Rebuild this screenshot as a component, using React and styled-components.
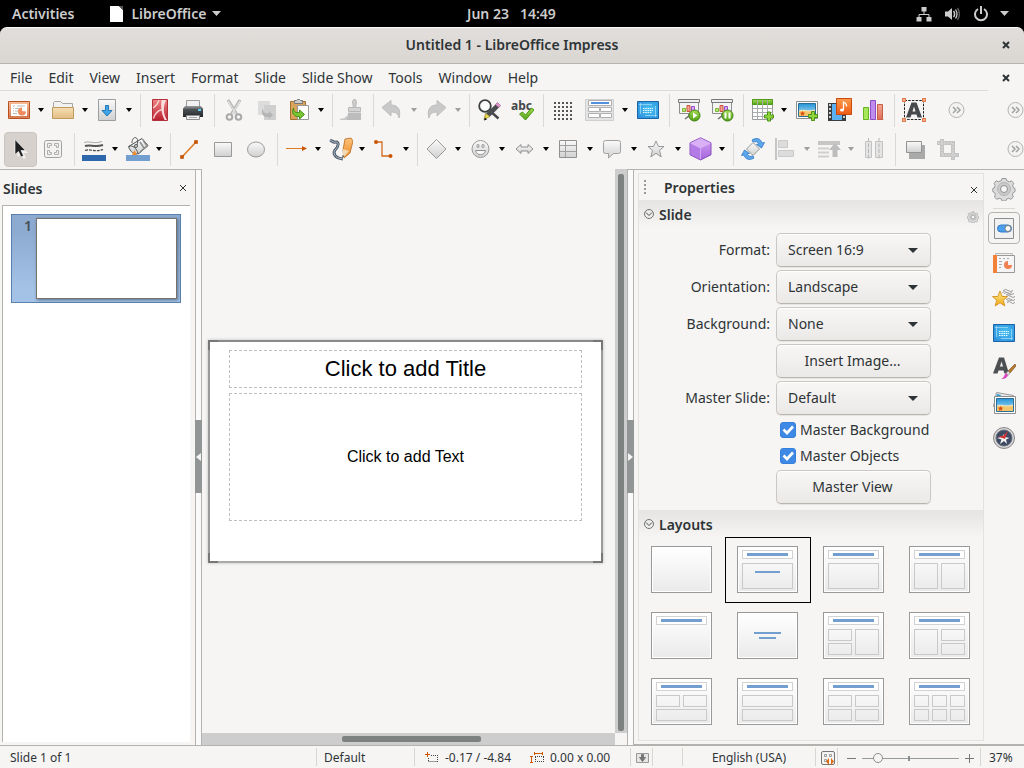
import React from "react";
import styled, { createGlobalStyle, css } from "styled-components";

const GlobalStyle = createGlobalStyle`
  *, *::before, *::after { box-sizing: border-box; }
  html, body { margin: 0; background: #f6f5f4; }
  body, button, input, select {
    font-family: "Noto Sans", "Open Sans", sans-serif;
    font-size: 14px;
    line-height: 20px;
    color: #2e3436;
  }
  button, input { margin: 0; }
`;

/* ---------- shell ---------- */

const Window = styled.div`
  display: flex;
  flex-direction: column;
  height: 100vh;
  min-height: 760px;
  overflow: hidden;
`;

const PlainButton = styled.button`
  border: 0;
  padding: 0;
  background: transparent;
  color: inherit;
  display: inline-flex;
  align-items: center;
  justify-content: center;
  flex: none;
  white-space: nowrap;
`;

const TopBar = styled.header`
  display: grid;
  grid-template-columns: 1fr auto 1fr;
  align-items: center;
  flex: none;
  height: 27px;
  padding: 0 15px 0 12px;
  background: #000;
  color: #ccc;
`;

const TopGroup = styled.div`
  display: flex;
  align-items: center;
  gap: ${(p) => p.$gap}px;
  justify-content: ${(p) => (p.$end ? "flex-end" : "flex-start")};
`;

const TopButton = styled(PlainButton)`
  gap: 6px;
  font-weight: 600;
`;

const ClockButton = styled(TopButton)`
  gap: 11px;
  padding-left: 2px;
`;

const TitleFrame = styled.div`
  flex: none;
  background: #000;
`;

const TitleBar = styled.div`
  display: grid;
  grid-template-columns: 24px 1fr 24px;
  align-items: center;
  height: 37px;
  padding: 0 6px 1px;
  border-top: 1px solid #fbfafa;
  border-bottom: 1px solid #b8b3ad;
  border-radius: 7px 7px 0 0;
  background: linear-gradient(#e1dedb, #dad6d2);
`;

const WindowTitle = styled.h1`
  grid-column: 2;
  margin: 0;
  text-align: center;
  font-size: 14px;
  line-height: 20px;
  font-weight: 600;
`;

const MenuRow = styled.div`
  display: flex;
  align-items: center;
  flex: none;
  height: 27px;
  padding-right: 6px;
`;

const MenuBar = styled.nav`
  display: flex;
  flex: 1;
  align-items: stretch;
  height: 27px;
  margin-right: 6px;
  padding-left: 2px;
  border-bottom: 1px solid #dddad7;
`;

const MenuItem = styled(PlainButton)`
  padding: 1px 8px 0;
`;

const CloseButton = styled(PlainButton)`
  width: 24px;
  height: 24px;
`;

const ToolRow = styled.div`
  display: flex;
  flex: none;
  justify-content: space-between;
  height: 39px;
  padding: 2px 0 2px 4px;
  overflow: hidden;
`;

const ToolSet = styled.div`
  display: flex;
  flex: 1;
  min-width: 0;
  overflow: hidden;
`;

const ToolButton = styled(PlainButton)`
  width: ${(p) => (p.$wide ? 41 : 33)}px;
  height: 35px;
  padding: 0 5px 1px 4px;
  border-radius: 4px;
  ${(p) =>
    p.$pressed &&
    css`
      background: #d6d1cd;
      border: 1px solid #cbc5bf;
      padding: 0 4px 1px 3px;
    `}
`;

const DropButton = styled(PlainButton)`
  width: 11px;
  height: 35px;
  padding: 0 4px 2px 1px;
  opacity: ${(p) => (p.disabled ? 0.35 : 1)};
`;

const ToolSeparator = styled.span`
  flex: none;
  width: 8px;
  height: 33px;
  margin-top: 1px;
  background: linear-gradient(#dbd8d5, #dbd8d5) 4px 0 / 1px 100% no-repeat;
`;

const OverflowButton = styled(PlainButton)`
  width: 17px;
  height: 35px;
  padding-bottom: 1px;
  margin-right: ${(p) => (p.$inner ? 42 : 0)}px;
`;

/* ---------- work area ---------- */

const Body = styled.main`
  display: flex;
  flex: 1;
  min-height: 0;
`;

const SlidePanel = styled.aside`
  display: flex;
  flex-direction: column;
  flex: none;
  width: 195px;
  padding-left: 2px;
  padding-bottom: 3px;
  border-top: 1px solid #b4b2af;
`;

const PanelHeader = styled.div`
  display: flex;
  align-items: center;
  justify-content: space-between;
  height: 35px;
  padding: 1px 8px 0 1px;
`;

const PanelTitle = styled.h2`
  margin: 0;
  padding-top: 1px;
  font-size: 14px;
  line-height: 20px;
  font-weight: 600;
`;

const SlideList = styled.div`
  flex: 1;
  margin-right: 5px;
  padding: 8px;
  background: #fff;
  border-top: 1px solid #b4b2af;
  border-left: 1px solid #b4b2af;
`;

const SlideThumb = styled.button`
  display: flex;
  align-items: flex-start;
  width: 170px;
  height: 89px;
  padding: 3px;
  border: 1px solid #5a80ad;
  background: linear-gradient(#8dabd0 20%, #a3c2e6 85%);
`;

const ThumbNumber = styled.span`
  width: 21px;
  text-align: right;
  padding-right: 4px;
  line-height: 16px;
  font-weight: 600;
  color: #474f57;
`;

const ThumbPage = styled.span`
  flex: 1;
  height: 81px;
  background: #fff;
  border: 1px solid #77726b;
  box-shadow: 1px 1px 3px #5a6f8a;
`;

const Splitter = styled.div`
  display: flex;
  align-items: center;
  flex: none;
  width: 7px;
  border: solid #b4b2af;
  border-width: 1px 1px 0 1px;
  background: #fbfafa;
`;

const SplitterGrip = styled(PlainButton)`
  width: 7px;
  height: 73px;
  margin: 0 -1px 2px;
  background: #919595;
`;

const Editor = styled.section`
  display: grid;
  grid-template: 1fr 12px / 1fr 12px;
  flex: 1;
  min-width: 0;
`;

const Canvas = styled.div`
  display: flex;
  align-items: center;
  min-width: 0;
  padding: 2px 12px 1px 6px;
`;

const SlidePage = styled.div`
  display: flex;
  flex-direction: column;
  gap: 5px;
  width: 100%;
  aspect-ratio: 16 / 9;
  padding: 8px 19px 40px;
  border: 2px solid transparent;
  background:
    linear-gradient(#777, #777) 0 0 / 10px 2px,
    linear-gradient(#777, #777) 0 0 / 2px 10px,
    linear-gradient(#777, #777) 100% 0 / 10px 2px,
    linear-gradient(#777, #777) 100% 0 / 2px 10px,
    linear-gradient(#777, #777) 0 100% / 10px 2px,
    linear-gradient(#777, #777) 0 100% / 2px 10px,
    linear-gradient(#777, #777) 100% 100% / 10px 2px,
    linear-gradient(#777, #777) 100% 100% / 2px 10px,
    linear-gradient(#8a8a8a, #8a8a8a) 0 0 / 100% 2px,
    linear-gradient(#aaa, #aaa) 0 100% / 100% 2px,
    linear-gradient(#9a9a9a, #9a9a9a) 0 0 / 2px 100%,
    linear-gradient(#9a9a9a, #9a9a9a) 100% 0 / 2px 100%,
    #fff;
  background-repeat: no-repeat;
  background-origin: border-box;
  box-shadow: 0 0 3px #bbb;
`;

const Placeholder = styled.div`
  display: flex;
  align-items: center;
  justify-content: center;
  flex: ${(p) => (p.$title ? "none" : "1")};
  height: ${(p) => (p.$title ? "38px" : "auto")};
  border: 1px dashed #bfbfbf;
  font-family: "Liberation Sans", Arial, sans-serif;
  font-size: ${(p) => (p.$title ? 22 : 16)}px;
  color: #000;
`;

const VScroll = styled.div`
  display: flex;
  padding: 5px 3px 2px;
  background: #cdcdcd;
`;

const HScroll = styled.div`
  padding: 3px 0 3px 34%;
  background: #cdcdcd;
`;

const ScrollThumb = styled.div`
  width: ${(p) => (p.$horizontal ? "51%" : "6px")};
  height: ${(p) => (p.$horizontal ? "6px" : "auto")};
  border-radius: 2px;
  background: #7d8281;
`;

/* ---------- sidebar ---------- */

const Sidebar = styled.aside`
  display: flex;
  flex: none;
  width: 390px;
  border-top: 1px solid #b4b2af;
  border-bottom: 1px solid #b4b2af;
`;

const Deck = styled.div`
  display: flex;
  flex-direction: column;
  width: 346px;
  margin: 3px 0 3px 4px;
  border: 1px solid #e4e2e0;
`;

const DeckHeader = styled.div`
  display: flex;
  align-items: center;
  height: 26px;
  padding: 0 2px 0 5px;
  gap: 17px;
`;

const DeckClose = styled(CloseButton)`
  width: 14px;
  margin-left: auto;
  padding-top: 5px;
`;

const SectionHeader = styled.div`
  display: flex;
  align-items: center;
  flex: none;
  height: 27px;
  padding: 1px 4px 0 4px;
  gap: 4px;
  background: linear-gradient(#e5e4e2, #f6f5f4);
`;

const MoreButton = styled(PlainButton)`
  margin-left: auto;
  padding-top: 5px;
`;

const Properties = styled.form`
  display: grid;
  grid-template-columns: 131px 155px;
  column-gap: 6px;
  row-gap: 3px;
  align-items: center;
  padding: 6px 0 6px;
`;

const FieldLabel = styled.label`
  text-align: right;
`;

const control = css`
  width: 100%;
  height: 34px;
  border: 1px solid #ccc7c2;
  border-bottom-color: #bab4ae;
  border-radius: 5px;
  background: linear-gradient(#f8f7f6, #ebe9e7);
  box-shadow: inset 0 1px #fff, 0 1px 1px #e6e4e2;
`;

const SelectWrap = styled.div`
  display: grid;
  align-items: center;
  & > * { grid-area: 1 / 1; }
  & > svg { justify-self: end; margin-right: 13px; pointer-events: none; }
`;

const Select = styled.select`
  ${control}
  appearance: none;
  padding: 0 30px 0 11px;
`;

const PushButton = styled.button`
  ${control}
  grid-column: 2;
  padding: 0 2px 0 0;
`;

const CheckGroup = styled.div`
  grid-column: 2;
  display: flex;
  flex-direction: column;
  gap: 6px;
  padding: 2px 0 1px 4px;
`;

const CheckLabel = styled.label`
  display: grid;
  grid-template-columns: 16px auto;
  column-gap: 4px;
  align-items: center;
  justify-content: start;
  height: 20px;
  white-space: nowrap;
  & > svg { grid-area: 1 / 1; pointer-events: none; visibility: hidden; }
  & > input:checked + svg { visibility: visible; }
`;

const Checkbox = styled.input`
  grid-area: 1 / 1;
  appearance: none;
  width: 16px;
  height: 16px;
  border: 1px solid #aaa;
  border-radius: 3px;
  background: #fff;
  &:checked { background: #3e89e5; border-color: #3580dd; }
`;

const LayoutGrid = styled.div`
  display: grid;
  grid-template-columns: repeat(4, 86px);
  grid-auto-rows: 66px;
`;

const LayoutButton = styled(PlainButton)`
  border: 1px solid ${(p) => (p.$selected ? "#000" : "transparent")};
  padding-right: 1px;
  padding-bottom: 1px;
`;

const TabBar = styled.nav`
  display: flex;
  flex-direction: column;
  align-items: center;
  flex: 1;
  padding: 3px 0;
`;

const TabButton = styled(PlainButton)`
  width: 32px;
  height: 32px;
  margin-bottom: 3px;
  border: 1px solid ${(p) => (p.$active ? "#b7b3af" : "transparent")};
  border-radius: 4px;
`;

const TabRule = styled.hr`
  flex: none;
  width: 22px;
  margin: 0 0 3px;
  border: 0;
  border-top: 1px solid #dbd8d5;
`;

/* ---------- status bar ---------- */

const StatusBar = styled.footer`
  display: flex;
  align-items: center;
  flex: none;
  height: 23px;
  border-top: 1px solid #b4b2af;
`;

const StatusCell = styled.div`
  display: flex;
  align-items: center;
  flex: ${(p) => (p.$width ? "none" : "1")};
  width: ${(p) => (p.$width ? `${p.$width}px` : "auto")};
  height: 18px;
  padding-top: 2px;
  padding-left: ${(p) => p.$pad ?? 8}px;
  gap: 6px;
  justify-content: ${(p) => (p.$center ? "center" : "flex-start")};
  border-left: ${(p) => (p.$width ? "1px solid #d8d5d2" : "0")};
  font-size: 12px;
  line-height: 16px;
  white-space: nowrap;
`;

const Coordinates = styled.span`
  display: flex;
  align-items: center;
  gap: 6px;
  width: ${(p) => (p.$first ? 99 : 90)}px;
`;

const ZoomSlider = styled.input`
  appearance: none;
  width: 97px;
  height: 12px;
  background:
    linear-gradient(#8b8e8f, #8b8e8f) 46px 4px / 2px 5px no-repeat,
    linear-gradient(#979a9b, #979a9b) 0 6px / 100% 1px no-repeat;
  &::-webkit-slider-thumb {
    appearance: none;
    width: 10px;
    height: 10px;
    border: 1px solid #8b8e8f;
    border-radius: 50%;
    background: #f6f5f4;
  }
`;

/* ---------- drawings ---------- */

const Svg = ({ w = 24, h = 24, children }) => (
  <svg width={w} height={h} viewBox={`0 0 ${w} ${h}`} fill="none" aria-hidden="true">
    {children}
  </svg>
);

const HiddenSvg = styled.svg`
  display: block;
  width: 0;
  height: 0;
`;

const SharedGradients = () => (
  <HiddenSvg aria-hidden="true">
    <defs>
      {[
        ["gGrey", "#fafafa", "#d0d0d0"],
        ["gOrange", "#f3a271", "#c9531f"],
        ["gFolder", "#f5dfb5", "#e2bd83"],
        ["gRed", "#f08484", "#b8202f"],
        ["gDark", "#5d6163", "#25282a"],
        ["gGreen", "#a4dc54", "#4fa316"],
        ["gSky", "#2493d6", "#bfe9fb"],
        ["gPurple", "#d5a8f3", "#a361dc"],
        ["gStar", "#ffe98a", "#f0a818"],
        ["gThumb", "#ffffff", "#eaeaea"],
        ["gMedia", "#ff9a4a", "#ee5a14"],
        ["gSalmon", "#f4a695", "#dd6f58"],
        ["gPencil", "#fdc27a", "#ec8a2a"],
      ].map(([id, a, b]) => (
        <linearGradient id={id} key={id} x1="0" y1="0" x2="0" y2="1">
          <stop offset="0" stopColor={a} />
          <stop offset="1" stopColor={b} />
        </linearGradient>
      ))}
      <radialGradient id="gBlue" cx=".55" cy=".45" r=".7">
        <stop offset="0" stopColor="#4cc4f4" />
        <stop offset="1" stopColor="#2c8ddb" />
      </radialGradient>
    </defs>
  </HiddenSvg>
);

const Caret = ({ w = 6, h = 4, color = "#000" }) => (
  <Svg w={w} h={h}>
    <path d={`M0 0H${w}L${w / 2} ${h}Z`} fill={color} />
  </Svg>
);

const Cross = ({ size = 8, weight = 2, color = "#2e3436" }) => (
  <Svg w={size} h={size}>
    <path d={`M1 1L${size - 1} ${size - 1}M${size - 1} 1L1 ${size - 1}`} stroke={color} strokeWidth={weight} />
  </Svg>
);

const Plus = ({ x, y }) => (
  <path
    transform={`translate(${x} ${y})`}
    d="M3.5.5h3v3h3v3h-3v3h-3v-3h-3v-3h3z"
    fill="#8fd53c"
    stroke="#4a9212"
  />
);

const Gear = ({ size = 24 }) => (
  <svg width={size} height={size} viewBox="0 0 24 24" fill="none" aria-hidden="true">
    <path
      d="M10 1.500h4l.7 2.200 2.600 1.100 2.200-1 2.200 2.500-1 2.200.8 2.500 1.500.5v3.200l-1.700.8-.9 2.300 1 2.200-2.500 2.300-2.200-1-2.300.8-.7 1.900h-3.600l-.7-1.900-2.300-.8-2.200 1-2.500-2.300 1-2.200-.9-2.300-1.700-.8v-3.200l1.500-.5.8-2.500-1-2.200 2.200-2.500 2.200 1 2.600-1.100z"
      fill="#dcdcdc"
      stroke="#959797"
    />
    <circle cx="12" cy="12" r="6.500" fill="#cbcbcb" stroke="#b5b5b5" />
    <circle cx="12" cy="12" r="3.500" fill="#f6f5f4" stroke="#8d8f8f" />
  </svg>
);

const MasterArt = () => (
  <>
    <path d="M1.500 3.500h21v17h-21z" fill="url(#gBlue)" stroke="#1a65a8" />
    <path d="M3 6.500h13M4.500 5v11M21 17.500H9M19.500 19V8" stroke="#a8e2fa" opacity=".7" />
    <path d="M7 10.500h10M7 12.500h10M7 14.500h9" stroke="#f0fbff" strokeDasharray="1.500 .8" />
  </>
);

const PictureArt = () => (
  <>
    <path d="M1.500 3.500h21v17h-21z" fill="#fff" stroke="#8d8f8f" />
    <path d="M3.500 5.500h17v13h-17z" fill="url(#gSky)" stroke="#2b6c99" />
    <path d="M4 13c5-2 8 1.500 16-1v6H4z" fill="#f3c66c" />
    <path d="M4 13c5-2 8 1.500 16-1" stroke="#f7edc9" />
    <path d="M7.500 13l.8 1.600 1.800.2-1.300 1.200.3 1.800-1.600-.9-1.600.9.3-1.800L5 14.800l1.700-.2z" fill="#dd4b12" />
  </>
);

const ScreenArt = () => (
  <>
    <path d="M12 15v4M8 21l4-3 4 3" stroke="#6d6f70" strokeWidth="1.500" />
    <path d="M2.500 4.500h19v11h-19z" fill="#f4f4f4" stroke="#8d8f8f" />
    <path d="M1.500 1.500h21v3h-21z" fill="#eee" stroke="#77797a" />
    <path d="M5.500 10.500h3v3h-3z" fill="#bfe97e" stroke="#7bb635" />
    <path d="M10 7.500h3v6h-3z" fill="#f5a492" stroke="#c9543c" />
    <path d="M14.500 8.500h3v5h-3z" fill="#d9abf5" stroke="#9650cf" />
  </>
);

const ICONS = {
  impress: (
    <>
      <path d="M.5 3.500h21v17H.5z" fill="#fff" stroke="#b9501f" />
      <path d="M2 5h18v14H2z" stroke="url(#gOrange)" strokeWidth="1.500" />
      <path d="M5 8h2M9 8h8M5 10.500h1M7 10.500h4M5 13h1M7 13h3M5 15.500h4" stroke="#bbb" />
      <path d="M14 13V9.500a4 4 0 1 0 4 4z" fill="#f08b5c" />
    </>
  ),
  open: (
    <>
      <path d="M1.500 19V4.500l1-1h6l2 2h10V19z" fill="#f2f2f2" stroke="#a5a5a5" />
      <path d="M.5 9.500h21v11H.5z" fill="url(#gFolder)" stroke="#c19a5d" />
    </>
  ),
  save: (
    <>
      <path d="M2.500 1.500h17v21h-17z" fill="url(#gGrey)" stroke="#9b9e9f" />
      <path d="M9.500 7.500h3v5h3.500l-5 5.500-5-5.500h3.500z" fill="#3fa5e6" stroke="#2478b6" />
    </>
  ),
  pdf: (
    <>
      <path d="M4.500 1.500h15v21h-15z" fill="url(#gRed)" stroke="#b3303b" />
      <path d="M13.500 2H18c-3 7-3 13 1 20h-2.500c-3-6-4-13-3-20z" fill="#f9dede" />
      <path d="M5.500 20.500C7 15 10 12.500 14 11.500M5 10c3-2 5-4.500 6-8" stroke="#f9d3d3" strokeWidth="1.300" />
    </>
  ),
  print: (
    <>
      <path d="M5.500 2.500h13v8h-13z" fill="#f1f1f1" stroke="#9b9d9e" />
      <path d="M2 10.500l2-2h16l2 2V19H2z" fill="url(#gDark)" />
      <path d="M2 10.500l2-2h16l2 2z" fill="#7c8082" />
      <path d="M5.500 17.500h13v4h-13z" fill="#f0f0f0" stroke="#8d8f8f" />
      <path d="M8 19.500h8" stroke="#aaa" />
      <path d="M17 11h3v2h-3z" fill="#5ecbf5" />
    </>
  ),
  cut: (
    <>
      <path d="M6 2l8.500 14M18 2L9.500 16" stroke="#b1b1b1" strokeWidth="3" />
      <path d="M6 3l8 13M18 3l-8 13" stroke="#dedede" strokeWidth="1.500" />
      <circle cx="7.500" cy="19" r="2.800" stroke="#a9a9a9" strokeWidth="2" />
      <circle cx="16.500" cy="19" r="2.800" stroke="#a9a9a9" strokeWidth="2" />
    </>
  ),
  copy: (
    <>
      <path d="M3 3h12v14H3z" fill="#dcdcdc" />
      <path d="M9 7h12v15H9z" fill="#cfcfcf" />
      <path d="M8 10c0 5 3 6 6 5v-2l4 4-4 4v-2c-5 1-9-3-6-9z" fill="#b5b5b5" />
    </>
  ),
  paste: (
    <>
      <path d="M2.500 3.500h15v18h-15z" fill="#d9a45d" stroke="#a3712f" />
      <path d="M6.500 4.500v-2h2l1-1h2l1 1h2v3h-8z" fill="#ccc" stroke="#777" />
      <path d="M9.500 7.500h11v14h-11z" fill="#fff" stroke="#999" />
      <path d="M5.500 10c0 4 2.500 5 6 4.500V12l5 4.500-5 4.500v-2.500c-5 1-8.500-3.500-6-8.500z" fill="#79c534" stroke="#458f15" />
    </>
  ),
  brush: (
    <>
      <path d="M0 21c3-1 5 0 6-3l14 4H0z" fill="#c8c8c8" />
      <path d="M13.500 1.500h2l1 2-1 7h-2l-1-7z" fill="#ccc" stroke="#bababa" />
      <path d="M8.500 9.500h12v4h-12z" fill="#d4d4d4" stroke="#b8b8b8" />
      <path d="M8 14.500h13V22H7z" fill="#bcbcbc" />
    </>
  ),
  undo: <path d="M1 9.500l9-7v4.500c8 0 10 6 8 13-1-4-3-6-8-6v4z" fill="#c9c9c9" stroke="#bdbdbd" />,
  redo: <path d="M21 9.500l-9-7V7C4 7 2 13 4 20c1-4 3-6 8-6v4z" fill="#c9c9c9" stroke="#bdbdbd" />,
  find: (
    <>
      <circle cx="8" cy="8" r="5.800" fill="#fafafa" stroke="#3b3e3f" strokeWidth="1.800" />
      <path d="M12.500 12.500l9 8" stroke="#45484a" strokeWidth="2.500" />
      <path d="M18.500 6.500l3.500 3-9 9-4-3z" fill="#4a4d50" />
      <path d="M18.500 6.500l2-2 3 3-1.500 2z" fill="#e39ad1" stroke="#934d80" strokeWidth=".6" />
      <path d="M8.500 15.500L7 21.500l6-3z" fill="#ecd94d" stroke="#80751f" strokeWidth=".6" />
      <path d="M7 22.500l1-3 2 2z" fill="#111" />
    </>
  ),
  spell: (
    <>
      <text x="1" y="12" fontFamily="Noto Sans, sans-serif" fontSize="12" fontWeight="700" fill="#44484a">abc</text>
      <path d="M9.500 16l3-2 3 3L21.500 10l2.500 2-8.500 10z" fill="url(#gGreen)" stroke="#4a9212" />
    </>
  ),
  grid: (
    <path
      d="M3 5h18M3 9h18M3 13h18M3 17h18M3 21h18"
      stroke="#555"
      strokeWidth="2"
      strokeDasharray="2 2"
    />
  ),
  masterSlide: <MasterArt />,
  present: (
    <>
      <ScreenArt />
      <circle cx="17.500" cy="17.500" r="5.500" fill="url(#gGreen)" stroke="#3f7f10" />
      <path d="M16 14.500v6l4.500-3z" fill="#fff" />
    </>
  ),
  presentPause: (
    <>
      <ScreenArt />
      <circle cx="17.500" cy="17.500" r="5.500" fill="url(#gGreen)" stroke="#3f7f10" />
      <path d="M15.500 14.500v6M19.500 14.500v6" stroke="#fff" strokeWidth="2" />
    </>
  ),
  table: (
    <>
      <path d="M1.500 1.500h20v20h-20z" fill="#fff" stroke="#9a9c9d" />
      <path d="M1.500 1.500h20v5h-20z" fill="url(#gGreen)" stroke="#4f9a17" />
      <path d="M1.500 10.500h20M1.500 14.500h20M1.500 18.500h20M6.500 2v19M11.500 2v19M16.500 2v19" stroke="#a9abac" />
      <Plus x={13} y={13.5} />
    </>
  ),
  image: (
    <>
      <PictureArt />
      <Plus x={13} y={13} />
    </>
  ),
  media: (
    <>
      <path d="M0 5h18v18H0z" fill="#393d3f" />
      <path d="M4 6h10v16H4z" fill="#5ab0f0" />
      <path d="M2 6v16M16 6v16" stroke="#fff" strokeWidth="1.500" strokeDasharray="2 2" />
      <path d="M8.500.5h15v16h-15z" fill="url(#gMedia)" stroke="#c94a10" />
      <path d="M15.500 11.500V4c2 1 3.500 2 3 4.500" stroke="#fff" strokeWidth="1.300" />
      <ellipse cx="14" cy="12" rx="2" ry="1.600" fill="#fff" />
    </>
  ),
  chart: (
    <>
      <path d="M2 21.500h21" stroke="#d5d3d1" />
      <path d="M2.500 9.500h5v12h-5z" fill="#a8e65a" stroke="#68b422" />
      <path d="M9.500 2.500h5v19h-5z" fill="#c18ded" stroke="#8d4ec5" />
      <path d="M16.500 6.500h5v15h-5z" fill="url(#gSalmon)" stroke="#c75e48" />
    </>
  ),
  textbox: (
    <>
      <path d="M2.500 2.500h19v19h-19z" stroke="#222" strokeDasharray="2.500 1.200" />
      <path d="M9.500 4.500h5L20 19.500h-4.500l-1-3h-5l-1 3H4zM12 8.500l-1.500 5h3z" fill="#45494b" fillRule="evenodd" />
      {[[0.5, 0.5], [20.5, 0.5], [0.5, 20.5], [20.5, 20.5]].map(([x, y]) => (
        <rect key={`${x}${y}`} x={x} y={y} width="3" height="3" fill="#f6b07c" stroke="#e07a50" />
      ))}
    </>
  ),
  cursor: (
    <>
      <path d="M8 3.500v15l3.500-3 2.500 5 2.500-1.200L14 14.500h4.500z" fill="#fff" opacity=".7" transform="translate(1.500 1.500)" />
      <path d="M7 2.500v15l3.500-3 2.500 5.500 2.500-1.200L13 13.500h4.500z" fill="#1e2021" stroke="#fff" strokeWidth=".6" />
    </>
  ),
  zoomFit: (
    <>
      <rect x="3.500" y="3.500" width="17" height="17" rx="2" fill="#f3f2f1" stroke="#a0a2a2" />
      <path
        d="M6.500 10.500v-4h4v2h-2v2zM17.500 10.500v-4h-4v2h2v2zM6.500 13.500v4h4v-2h-2v-2zM17.500 13.500v4h-4v-2h2v-2z"
        stroke="#9c9e9e"
        strokeWidth=".8"
      />
    </>
  ),
  lineColor: (
    <>
      <path d="M2 5.500c6-2 9 2 18-1" stroke="#aaa" />
      <path d="M3 9c6-2 9 2 18-1" stroke="#555" strokeWidth="2" />
      <path d="M3 13.500c6-2 9 2 18-1" stroke="#444" strokeWidth="1.200" strokeDasharray="3 1" />
      <path d="M0 18h24v6H0z" fill="#2f67ac" />
    </>
  ),
  fillColor: (
    <>
      <path d="M2.500 9.500L16 1.500l6 7-9 8c-5 2-9-2-10.500-7z" fill="url(#gGrey)" stroke="#505456" />
      <path d="M3 9.500c3-2 8 2 9 7" stroke="#505456" />
      <path d="M17 3l4 6-7 6M14 5l4 6" stroke="#8a8c8d" strokeWidth="1.500" />
      <path d="M6 6c0-8 8-7 5 2" stroke="#505456" />
      <circle cx="10" cy="9" r="1.500" fill="#e5e5e5" stroke="#505456" />
      <path d="M8.500 13l2.500 5H6z" fill="#f08b2c" />
      <path d="M0 18h24v6H0z" fill="#729fcf" />
    </>
  ),
  line: (
    <>
      <path d="M4 20L18 5" stroke="#e07a22" strokeWidth="1.500" />
      <path d="M2.500 18.500h3v3h-3zM16.500 3.500h3v3h-3z" fill="#cc5500" stroke="#b84c00" strokeWidth=".6" />
    </>
  ),
  rect: <path d="M3.500 5.500h17v14h-17z" fill="url(#gGrey)" stroke="#999" />,
  ellipse: <ellipse cx="12" cy="12.500" rx="8.500" ry="7.500" fill="url(#gGrey)" stroke="#999" />,
  arrowLine: (
    <>
      <path d="M1 11.500h17" stroke="#e07a22" />
      <path d="M17 9l5 2.500-5 2.500z" fill="#cc5500" />
    </>
  ),
  curve: (
    <>
      <path d="M1 3c2 1 4 3 6 2 3 0 3 4-1 8-2 3-1 8 8 9" stroke="#4b5a68" strokeWidth="3" />
      <path d="M1 3c2 1 4 3 6 2 3 0 3 4-1 8-2 3-1 8 8 9" stroke="#aebccb" strokeWidth="1" />
      <path d="M16 2l6-1 2 3-3 12-6 5-1-8z" fill="url(#gPencil)" stroke="#b56a1a" strokeWidth=".8" />
      <path d="M14 12l6 2-6 7z" fill="#eed9b4" />
      <path d="M13.500 18l1.500 1-1.500 2z" fill="#222" />
    </>
  ),
  connector: (
    <>
      <path d="M3 5h6v14h9" stroke="#d2691e" strokeWidth="1.300" />
      <circle cx="3" cy="5" r="2" fill="#cc5500" />
      <circle cx="17.500" cy="19" r="2" fill="#cc5500" />
    </>
  ),
  diamond: <path d="M11.500 2.500l9.500 9.500-9.500 9.500L2 12z" fill="url(#gGrey)" stroke="#999" />,
  smiley: (
    <>
      <circle cx="11.500" cy="12" r="8.500" fill="url(#gGrey)" stroke="#999" />
      <rect x="8" y="7.500" width="2" height="3" rx="1" stroke="#909090" />
      <rect x="13" y="7.500" width="2" height="3" rx="1" stroke="#909090" />
      <path d="M6.500 13.500h10c-1 5.500-9 5.500-10 0z" fill="#fafafa" stroke="#909090" />
    </>
  ),
  doubleArrow: <path d="M3 12l5-4.500v2.500h7V7.500l5 4.500-5 4.500V14H8v2.500z" fill="url(#gGrey)" stroke="#909090" />,
  flow: (
    <>
      <path d="M2.500 3.500h17v17h-17z" fill="url(#gGrey)" stroke="#909090" />
      <path d="M8.500 4v16M3 8.500h16M3 14.500h16" stroke="#a0a0a0" />
    </>
  ),
  callout: <path d="M4.500 3.500h13q2 0 2 2v9q0 2-2 2h-5l-5 4.500v-4.500h-3q-2 0-2-2v-9q0-2 2-2z" fill="url(#gGrey)" stroke="#a0a0a0" />,
  star: <path d="M11 4l2.400 5.500H19l-4.500 4 1.700 6.500-5.200-3.700L5.800 20l1.700-6.500-4.500-4h5.600z" fill="url(#gGrey)" stroke="#999" />,
  cube: (
    <>
      <path d="M11.500 .8L22 5.800v12L11.500 23 1 17.800v-12z" fill="url(#gPurple)" stroke="#8a4fc0" />
      <path d="M1.500 6.500l10 4.500v11.500l-10-5z" fill="#b37be5" />
      <path d="M1.500 6l10-4.700L21.500 6l-10 5z" fill="#d9b0f6" />
      <path d="M1.500 6l10 5 10-5M11.500 11v11" stroke="#d9b4f5" strokeWidth=".8" />
    </>
  ),
  rotate: (
    <>
      <path d="M12 5.500l6.500 6.500-6.500 6.500L5.500 12z" fill="url(#gGrey)" stroke="#999" />
      <path d="M11 3c5-3 9-1 10 3l2.500-.5-3 5.500-5-3.500 2.500-.5c-1-2-3-3-6-2z" fill="#5ca8ef" stroke="#2f77c4" strokeWidth=".8" />
      <path d="M13 21c-5 3-9 1-10-3l-2.500.5 3-5.500 5 3.500-2.500.5c1 2 3 3 6 2z" fill="#5ca8ef" stroke="#2f77c4" strokeWidth=".8" />
    </>
  ),
  align: (
    <>
      <path d="M1 1h2v22H1z" fill="#c5c5c5" />
      <path d="M4.500 3.500h9v7h-9zM4.500 13.500h15v6h-15z" fill="#dcdcdc" stroke="#cbcbcb" />
    </>
  ),
  arrange: (
    <>
      <path d="M0 4h22v4H0z" fill="#c6c6c6" />
      <path d="M0 11.500h11M0 15.500h11M0 19.500h11" stroke="#cfcfcf" strokeWidth="2" />
      <path d="M17 6l6 7h-3.500v7h-5v-7H11z" fill="#bdbdbd" />
    </>
  ),
  distribute: (
    <>
      <path d="M4 5h5v15H4zM14 5h6v15h-6z" fill="#e4e4e4" />
      <path d="M6.500 1v22M17 1v22" stroke="#b5b5b5" strokeDasharray="4 1.500" />
      <path d="M3.500 4.500h6v16h-6zM13.500 4.500h7v16h-7z" stroke="#c2c2c2" />
    </>
  ),
  shadow: (
    <>
      <path d="M6 8h16v14H6z" fill="#a9a9a9" />
      <path d="M3.500 4.500h15v11h-15z" fill="url(#gGrey)" stroke="#939393" />
    </>
  ),
  crop: (
    <>
      <path d="M6 2v16h17M1 6h16v17" stroke="#c4c4c4" strokeWidth="4" />
      <path d="M6 3v15h16M2 6h15v16" stroke="#dedede" strokeWidth="1" strokeDasharray="2 1" />
    </>
  ),
  propertiesTab: (
    <>
      <path d="M2.500 2.500h19v20h-19z" fill="#f1f1f1" stroke="#8b8d8e" />
      <rect x="5.500" y="9" width="14" height="7" rx="3.500" fill="#4aa0ee" stroke="#2f7ac6" />
      <circle cx="16" cy="12.500" r="3" fill="#fff" stroke="#777" />
    </>
  ),
  transitionTab: (
    <>
      <path d="M3.500 2.500h17v17h-17z" fill="#eee" stroke="#bbb" />
      <path d="M1.500 4.500h21v17h-21z" fill="#f5f5f5" stroke="#999" />
      <path d="M1 4h4v18H1z" fill="#f2813a" />
      <path d="M7 7.500h2M11 7.500h2M15 7.500h2M7 10.500h3M7 13.500h3M7 16.500h2" stroke="#aaa" />
      <path d="M16 14v-4a4 4 0 1 0 4 4z" fill="#f08250" />
    </>
  ),
  animationTab: (
    <>
      <path d="M11 4.500q3-2 5 0t5 0M12 7.500q3-2 5 0t5 0M14 10.500q3-2 5 0t4 0M14 13.500q3-2 5 0t4 0M15 16.500q3-2 4 0t4 0" stroke="#999" />
      <path d="M10 6.500q3-2 5 0t5 0M14 9q3-2 5 0M15 15q3-2 5 0" stroke="#aaa" />
      <path d="M8 5l2.200 5.500h5.300l-4.200 3.700 1.500 5.800L8 16.800 3.200 20l1.500-5.800L.5 10.500h5.300z" fill="url(#gStar)" stroke="#d99a2a" />
    </>
  ),
  masterTab: <MasterArt />,
  stylesTab: (
    <>
      <path d="M7 1.500h5L17 17.500h-4.500l-1-3h-5l-1 3H1zM9.500 5.500L8 10.500h3z" fill="#4c5052" fillRule="evenodd" />
      <path d="M23 8l1 2-6 7-2-2z" fill="#b87a2e" stroke="#6b4415" strokeWidth=".6" />
      <path d="M16 15l2 2-2 2.500-2-2z" fill="#ddd" stroke="#888" strokeWidth=".6" />
      <path d="M14 17l2 2c-1 3-3 4-7 4 3-1 3-4 5-6z" fill="#d84bc0" />
    </>
  ),
  galleryTab: (
    <>
      <path d="M4.500 1.500l17 3-3 14-17-3z" fill="#e8e8e8" stroke="#999" />
      <path d="M5 3l4 1-3 10-3-1z" fill="#2f9fdc" />
      <g transform="translate(1 2)"><PictureArt /></g>
    </>
  ),
  navigatorTab: (
    <>
      <circle cx="12" cy="12" r="10.500" fill="#d5d5d5" stroke="#888" />
      <circle cx="12" cy="12" r="8" fill="#3d4a63" stroke="#68707d" />
      <path d="M12 8l1 3 4.500 1-3.500 1.500 1 4.500-3-3-4 3 1.500-4.500L5 12l5-1z" fill="#f3f3f3" />
      <path d="M16 5l-3 8-7-2.500 5-.5z" fill="#cf3434" />
    </>
  ),
};

const Icon = ({ name }) => <Svg>{ICONS[name]}</Svg>;

const ViewsIcon = () => (
  <Svg w={30} h={24}>
    <path d="M.5 1.500h28v21H.5z" fill="#e4e4e4" stroke="#cfcfcf" />
    <path d="M3.500 2.500h23v5h-23zM3.500 9.500h11v4h-11zM15.500 9.500h11v4h-11zM3.500 15.500h11v4h-11zM15.500 15.500h11v4h-11z" fill="#fff" stroke="#b0b0b0" />
    <path d="M6 5h18" stroke="#5090dd" strokeWidth="2" />
  </Svg>
);

const ChevronCircle = () => (
  <Svg w={17} h={18}>
    <circle cx="8.500" cy="9" r="7.500" fill="#f4f3f2" stroke="#b2b4b4" />
    <path d="M5 6l3 3-3 3M9 6l3 3-3 3" stroke="#a0a2a2" strokeWidth="1.500" />
  </Svg>
);

const Expander = () => (
  <Svg w={12} h={12}>
    <circle cx="6" cy="6" r="4.500" stroke="#707475" />
    <path d="M3 4.500l3 3 3-3" stroke="#4a4e50" />
  </Svg>
);

/* ---------- data ---------- */

const MENUS = ["File", "Edit", "View", "Insert", "Format", "Slide", "Slide Show", "Tools", "Window", "Help"];

// "|" is a separator; "+" marks a split button, "-" a split button that is unavailable
const STANDARD = [
  ["impress", "+"], ["open", "+"], ["save", "+"], "|",
  ["pdf"], ["print"], "|",
  ["cut"], ["copy"], ["paste", "+"], "|",
  ["brush"], "|",
  ["undo", "-"], ["redo", "-"], "|",
  ["find"], ["spell"], "|",
  ["grid"], ["views", "+"], ["masterSlide"], "|",
  ["present"], ["presentPause"], "|",
  ["table", "+"], ["image"], ["media"], ["chart"], "|",
  ["textbox"],
];

const DRAWING = [
  ["cursor"], ["zoomFit"], "|",
  ["lineColor", "+"], ["fillColor", "+"], "|",
  ["line"], ["rect"], ["ellipse"], "|",
  ["arrowLine", "+"], ["curve", "+"], ["connector", "+"], "|",
  ["diamond", "+"], ["smiley", "+"], ["doubleArrow", "+"], ["flow", "+"], ["callout", "+"], ["star", "+"], ["cube", "+"], "|",
  ["rotate"], ["align", "-"], ["arrange", "-"], ["distribute"], "|",
  ["shadow"], ["crop"],
];

const TABS = ["propertiesTab", "transitionTab", "animationTab", "masterTab", "stylesTab", "galleryTab", "navigatorTab"];

const TOP = [17, 12];
const BOTTOM = [31, 12];
const FULL = [17, 26];
const row = ([y, h], xs) => xs.map(([x, w]) => [x, y, w, h]);
const ONE = [[5, 51]];
const TWO = [[5, 24], [32, 24]];
const THREE = [[5, 15], [23, 15], [41, 15]];

const LAYOUTS = [
  { name: "Blank Slide" },
  { name: "Title Slide", title: true, boxes: row(FULL, ONE), bars: [[18, 25, 25]] },
  { name: "Title, Content", title: true, boxes: row(FULL, ONE) },
  { name: "Title and 2 Content", title: true, boxes: row(FULL, TWO) },
  { name: "Title Only", title: true },
  { name: "Centered Text", bars: [[17, 20, 27], [22, 25, 17]] },
  { name: "Title, 2 Content and Content", title: true, boxes: [...row(TOP, [TWO[0]]), ...row(BOTTOM, [TWO[0]]), ...row(FULL, [TWO[1]])] },
  { name: "Title, Content and 2 Content", title: true, boxes: [...row(FULL, [TWO[0]]), ...row(TOP, [TWO[1]]), ...row(BOTTOM, [TWO[1]])] },
  { name: "Title, 2 Content over Content", title: true, boxes: [...row(TOP, TWO), ...row(BOTTOM, ONE)] },
  { name: "Title, Content over Content", title: true, boxes: [...row(TOP, ONE), ...row(BOTTOM, ONE)] },
  { name: "Title, 4 Content", title: true, boxes: [...row(TOP, TWO), ...row(BOTTOM, TWO)] },
  { name: "Title, 6 Content", title: true, boxes: [...row(TOP, THREE), ...row(BOTTOM, THREE)] },
];

const LayoutArt = ({ title, boxes = [], bars = [] }) => (
  <Svg w={61} h={47}>
    <rect x=".5" y=".5" width="60" height="46" fill="#fff" stroke="#999" />
    <rect x="2" y="2" width="57" height="43" fill="url(#gThumb)" />
    {title && (
      <>
        <rect x="5.500" y="4.500" width="50" height="8" fill="#fff" stroke="#d2d2d2" />
        <rect x="10" y="7" width="41" height="3" fill="#729fcf" />
      </>
    )}
    {boxes.map(([x, y, w, h]) => (
      <rect key={`${x}-${y}`} x={x + 0.5} y={y + 0.5} width={w - 1} height={h - 1} stroke="#c9c9c9" />
    ))}
    {bars.map(([x, y, w]) => (
      <rect key={y} x={x} y={y} width={w} height="2" fill="#729fcf" />
    ))}
  </Svg>
);

/* ---------- composed parts ---------- */

const Tools = ({ items }) => (
  <ToolSet>
    {items.map((item, i) => {
      if (item === "|") return <ToolSeparator key={i} />;
      const [name, drop] = item;
      return (
        <React.Fragment key={i}>
          <ToolButton type="button" aria-label={name} $wide={name === "views"} $pressed={name === "cursor"}>
            {name === "views" ? <ViewsIcon /> : <Icon name={name} />}
          </ToolButton>
          {drop && (
            <DropButton type="button" aria-label={`${name} options`} disabled={drop === "-"}>
              <Caret />
            </DropButton>
          )}
        </React.Fragment>
      );
    })}
  </ToolSet>
);

const Field = ({ id, label, value }) => (
  <>
    <FieldLabel htmlFor={id}>{label}</FieldLabel>
    <SelectWrap>
      <Select id={id} defaultValue={value}>
        <option>{value}</option>
      </Select>
      <Caret w={10} h={5} color="#2e3436" />
    </SelectWrap>
  </>
);

const Check = ({ label }) => (
  <CheckLabel>
    <Checkbox type="checkbox" defaultChecked />
    <Svg w={16} h={16}>
      <path d="M3.500 7.500L7 11l6-6.500" stroke="#fff" strokeWidth="2.600" />
    </Svg>
    {label}
  </CheckLabel>
);

const Split = ({ left }) => (
  <Splitter>
    <SplitterGrip type="button" aria-label="Toggle panel">
      <Svg w={5} h={8}>
        <path d={left ? "M5 0v8L0 4z" : "M0 0v8l5-4z"} fill="#f6f5f4" />
      </Svg>
    </SplitterGrip>
  </Splitter>
);

export default function App() {
  return (
    <Window>
      <GlobalStyle />
      <SharedGradients />

      <TopBar>
        <TopGroup $gap={35}>
          <TopButton type="button">Activities</TopButton>
          <TopButton type="button">
            <Svg w={16} h={18}>
              <path d="M1 1h9l4 4v12H1z" fill="#fff" />
              <path d="M10 1h4v4z" fill="#555" />
            </Svg>
            LibreOffice
            <Caret w={9} h={5} color="#ccc" />
          </TopButton>
        </TopGroup>
        <ClockButton type="button">
          <span>Jun 23</span>
          <span>14:49</span>
        </ClockButton>
        <TopGroup $gap={12} $end>
          <Svg w={16} h={16}>
            <path d="M8 5v4M3 12V8.500h10V12" stroke="#ccc" />
            <path d="M5.500 1h5v4.500h-5zM.5 11h5v4.500h-5zM10.500 11h5v4.500h-5z" fill="#ccc" />
          </Svg>
          <Svg w={16} h={16}>
            <path d="M1 5.500h3L8 2v12l-4-3.500H1z" fill="#ccc" />
            <path d="M9.500 5c1.500 2 1.500 4 0 6" stroke="#ccc" strokeWidth="1.500" />
            <path d="M11.500 3.500c2 3 2 6 0 9" stroke="#ccc" strokeWidth="1.300" />
            <path d="M13.500 2c2.500 4 2.500 8 0 12" stroke="#555" strokeWidth="1.500" />
          </Svg>
          <Svg w={16} h={16}>
            <path d="M6 3a6 6 0 1 0 6 0M9 0v8" stroke="#ccc" strokeWidth="2" />
          </Svg>
          <Caret w={9} h={5} color="#ccc" />
        </TopGroup>
      </TopBar>

      <TitleFrame>
        <TitleBar>
          <WindowTitle>Untitled 1 - LibreOffice Impress</WindowTitle>
          <CloseButton type="button" aria-label="Close window"><Cross /></CloseButton>
        </TitleBar>
      </TitleFrame>

      <MenuRow>
        <MenuBar>
          {MENUS.map((m) => <MenuItem type="button" key={m}>{m}</MenuItem>)}
        </MenuBar>
        <CloseButton type="button" aria-label="Close document"><Cross /></CloseButton>
      </MenuRow>

      <ToolRow>
        <Tools items={STANDARD} />
        <OverflowButton type="button" aria-label="More tools" $inner><ChevronCircle /></OverflowButton>
        <OverflowButton type="button" aria-label="More toolbars"><ChevronCircle /></OverflowButton>
      </ToolRow>
      <ToolRow>
        <Tools items={DRAWING} />
        <OverflowButton type="button" aria-label="More drawing tools"><ChevronCircle /></OverflowButton>
      </ToolRow>

      <Body>
        <SlidePanel>
          <PanelHeader>
            <PanelTitle>Slides</PanelTitle>
            <PlainButton type="button" aria-label="Close slides"><Cross weight={1} /></PlainButton>
          </PanelHeader>
          <SlideList>
            <SlideThumb type="button">
              <ThumbNumber>1</ThumbNumber>
              <ThumbPage />
            </SlideThumb>
          </SlideList>
        </SlidePanel>
        <Split left />

        <Editor>
          <Canvas>
            <SlidePage>
              <Placeholder $title>Click to add Title</Placeholder>
              <Placeholder>Click to add Text</Placeholder>
            </SlidePage>
          </Canvas>
          <VScroll><ScrollThumb /></VScroll>
          <HScroll><ScrollThumb $horizontal /></HScroll>
        </Editor>

        <Split />
        <Sidebar>
          <Deck>
            <DeckHeader>
              <Svg w={3} h={14}>
                <path d="M1 0v14" stroke="#999" strokeWidth="2" strokeDasharray="2 2" />
              </Svg>
              <PanelTitle>Properties</PanelTitle>
              <DeckClose type="button" aria-label="Close sidebar deck"><Cross weight={1} /></DeckClose>
            </DeckHeader>
            <SectionHeader>
              <Expander />
              <PanelTitle>Slide</PanelTitle>
              <MoreButton type="button" aria-label="More options"><Gear size={12} /></MoreButton>
            </SectionHeader>
            <Properties>
              <Field id="format" label="Format:" value="Screen 16:9" />
              <Field id="orientation" label="Orientation:" value="Landscape" />
              <Field id="background" label="Background:" value="None" />
              <PushButton type="button">Insert Image...</PushButton>
              <Field id="master" label="Master Slide:" value="Default" />
              <CheckGroup>
                <Check label="Master Background" />
                <Check label="Master Objects" />
              </CheckGroup>
              <PushButton type="button">Master View</PushButton>
            </Properties>
            <SectionHeader>
              <Expander />
              <PanelTitle>Layouts</PanelTitle>
            </SectionHeader>
            <LayoutGrid>
              {LAYOUTS.map((l, i) => (
                <LayoutButton type="button" key={l.name} aria-label={l.name} $selected={i === 1}>
                  <LayoutArt {...l} />
                </LayoutButton>
              ))}
            </LayoutGrid>
          </Deck>
          <TabBar>
            <TabButton type="button" aria-label="Sidebar settings"><Gear /></TabButton>
            <TabRule />
            {TABS.map((t, i) => (
              <TabButton type="button" key={t} aria-label={t} $active={i === 0}><Icon name={t} /></TabButton>
            ))}
          </TabBar>
        </Sidebar>
      </Body>

      <StatusBar>
        <StatusCell $pad={10}>Slide 1 of 1</StatusCell>
        <StatusCell $width={98} $pad={7}>Default</StatusCell>
        <StatusCell $width={216} $pad={10}>
          <Coordinates $first>
            <Svg w={14} h={14}>
              <path d="M0 3.500h5M2.500 1v5" stroke="#cc5500" />
              <path d="M3.500 10.500h9M12.500 4v7M6 4.500h7M3.500 7v4" stroke="#444" strokeDasharray="1 1" />
            </Svg>
            -0.17 / -4.84
          </Coordinates>
          <Coordinates>
            <Svg w={14} h={14}>
              <path d="M4 2.500h9M4.500 1v3M12.500 1v3M0 5.500h3M0 11.500h3M1.500 6v5" stroke="#cc5500" />
              <path d="M5 5.500h9M5 10.500h9M5.500 6v5M13.500 6v5" stroke="#444" strokeDasharray="1 1" />
            </Svg>
            0.00 x 0.00
          </Coordinates>
        </StatusCell>
        <StatusCell $width={22} $pad={5}>
          <Svg w={14} h={12}>
            <path d="M.5 1.500h12v9H.5z" fill="#e4e4e4" stroke="#999" />
            <path d="M5.500 2.500h2v3h2l-3 4-3-4h2z" fill="#777" stroke="#555" strokeWidth=".6" />
          </Svg>
        </StatusCell>
        <StatusCell $width={30} />
        <StatusCell $width={133} $pad={0} $center>English (USA)</StatusCell>
        <StatusCell $width={22} $pad={4}>
          <Svg w={16} h={16}>
            <rect x="1.500" y="1.500" width="13" height="13" rx="1.500" fill="#f4f3f2" stroke="#777" />
            <path d="M4.500 6.500v-2h2v2zM9.500 6.500v-2h2v2zM4.500 9.500h2v2h-2z" stroke="#888" strokeWidth=".8" />
            <path d="M9 8l-3 3.500L9 15zM11 8l3 3.500-3 3.500z" fill="#e06a10" />
          </Svg>
        </StatusCell>
        <StatusCell $width={143} $pad={9}>
          <PlainButton type="button" aria-label="Zoom out">
            <Svg w={9} h={9}><path d="M0 4.500h9" stroke="#777" /></Svg>
          </PlainButton>
          <ZoomSlider type="range" min="0" max="100" defaultValue="13" aria-label="Zoom" />
          <PlainButton type="button" aria-label="Zoom in">
            <Svg w={9} h={9}><path d="M0 4.500h9M4.500 0v9" stroke="#777" /></Svg>
          </PlainButton>
        </StatusCell>
        <StatusCell $width={44}>37%</StatusCell>
      </StatusBar>
    </Window>
  );
}
